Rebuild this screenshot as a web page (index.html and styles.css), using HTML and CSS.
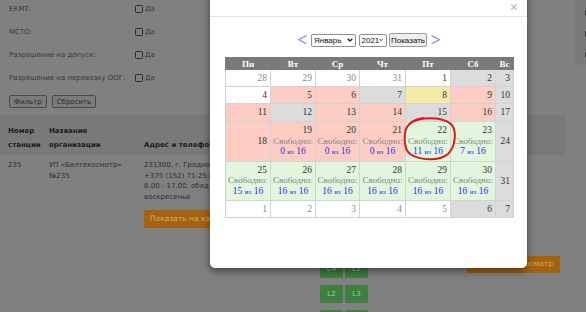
FILE: index.html
```html
<!DOCTYPE html>
<html lang="ru">
<head>
<meta charset="utf-8">
<title>Техосмотр</title>
<link rel="stylesheet" href="styles.css">
</head>
<body>
<div class="page">
  <div class="filters">
    <div class="filter-col">
      <div class="frow"><span class="flabel">ЕКМТ:</span><span class="chk"></span><span>Да</span></div>
      <div class="frow"><span class="flabel">МСТО:</span><span class="chk"></span><span>Да</span></div>
      <div class="frow"><span class="flabel">Разрешение на допуск:</span><span class="chk"></span><span>Да</span></div>
      <div class="frow"><span class="flabel">Разрешение на перевозку ООГ:</span><span class="chk"></span><span>Да</span></div>
      <div class="btns"><span class="btn">Фильтр</span><span class="btn">Сбросить</span></div>
    </div>
    <div class="filter-side">
      <span class="chk dark"></span><span class="chk dark"></span><span class="chk dark"></span>
    </div>
  </div>
  <div class="results-head">
    <div class="c-num">Номер<br>станции</div>
    <div class="c-name">Название<br>организации</div>
    <div class="c-addr">Адрес и телефон</div>
  </div>
  <div class="results-row">
    <div class="c-num">235</div>
    <div class="c-name">УП «Белтехосмотр»<br>№235</div>
    <div class="c-addr">
      <div class="addr">231300, г. Гродно, ул. Суворова, 135<br>+375 (152) 71-25-00<br>8.00 - 17.00, обед 13.00 - 14.00, выходной:<br>воскресенье</div>
      <span class="obtn">Показать на карте</span>
    </div>
    <div class="c-lines">
      <span class="gbtn">B1</span><span class="gbtn">B2</span>
      <span class="gbtn">C1</span><span class="gbtn">C2</span>
      <span class="gbtn">C3</span><span class="gbtn">M1</span>
      <span class="gbtn">M2</span><span class="gbtn">M3</span>
      <span class="gbtn">C4</span><span class="gbtn">L1</span>
      <span class="gbtn">L2</span><span class="gbtn">L3</span>
      <span class="gbtn"></span><span class="gbtn"></span>
    </div>
    <div class="c-act"><span class="obtn wide">Пройти техосмотр</span></div>
  </div>
</div>

<div class="modal">
  <div class="modal-head"><span class="close">×</span></div>
  <div class="modal-body">
    <div class="nav">
      <span class="arrow">&lt;</span>
      <span class="sel month"><span>Январь</span><svg width="6" height="4" viewBox="0 0 6 4"><path d="M0.7 0.7 L3 3 L5.3 0.7" fill="none" stroke="#222" stroke-width="1.3"/></svg></span>
      <span class="sel year"><span>2021</span><svg width="6" height="4" viewBox="0 0 6 4"><path d="M0.7 0.7 L3 3 L5.3 0.7" fill="none" stroke="#222" stroke-width="1.3"/></svg></span>
      <span class="show">Показать</span>
      <span class="arrow">&gt;</span>
    </div>
    <table class="cal">
      <colgroup><col class="w45"><col class="w45"><col class="w44"><col class="w46"><col class="w45"><col class="w45"><col class="w18"></colgroup>
      <thead><tr><th>Пн</th><th>Вт</th><th>Ср</th><th>Чт</th><th>Пт</th><th>Сб</th><th>Вс</th></tr></thead>
      <tbody>
        <tr class="r17">
          <td class="o">28</td><td class="o">29</td><td class="o">30</td><td class="o">31</td><td>1</td><td class="g">2</td><td class="g">3</td>
        </tr>
        <tr class="r17">
          <td>4</td><td class="p">5</td><td class="p">6</td><td class="g">7</td><td class="y">8</td><td class="p">9</td><td class="g">10</td>
        </tr>
        <tr class="r18">
          <td class="p">11</td><td class="g">12</td><td class="p">13</td><td class="p">14</td><td class="g">15</td><td class="p">16</td><td class="g">17</td>
        </tr>
        <tr class="r40">
          <td class="p">18</td>
          <td class="p"><div>19</div><div class="free">Свободно:</div><div class="cnt">0 <small>из</small> 16</div></td>
          <td class="p"><div>20</div><div class="free">Свободно:</div><div class="cnt">0 <small>из</small> 16</div></td>
          <td class="p"><div>21</div><div class="free">Свободно:</div><div class="cnt">0 <small>из</small> 16</div></td>
          <td class="gr"><div>22</div><div class="free">Свободно:</div><div class="cnt">11 <small>из</small> 16</div></td>
          <td class="gr"><div>23</div><div class="free">Свободно:</div><div class="cnt">7 <small>из</small> 16</div></td>
          <td class="g">24</td>
        </tr>
        <tr class="r39">
          <td class="gr"><div>25</div><div class="free">Свободно:</div><div class="cnt">15 <small>из</small> 16</div></td>
          <td class="gr"><div>26</div><div class="free">Свободно:</div><div class="cnt">16 <small>из</small> 16</div></td>
          <td class="gr"><div>27</div><div class="free">Свободно:</div><div class="cnt">16 <small>из</small> 16</div></td>
          <td class="gr"><div>28</div><div class="free">Свободно:</div><div class="cnt">16 <small>из</small> 16</div></td>
          <td class="gr"><div>29</div><div class="free">Свободно:</div><div class="cnt">16 <small>из</small> 16</div></td>
          <td class="gr"><div>30</div><div class="free">Свободно:</div><div class="cnt">16 <small>из</small> 16</div></td>
          <td class="g">31</td>
        </tr>
        <tr class="r17">
          <td class="o">1</td><td class="o">2</td><td class="o">3</td><td class="o">4</td><td class="o">5</td><td class="g">6</td><td class="g">7</td>
        </tr>
      </tbody>
    </table>
  </div>
  <svg class="mark" width="58" height="46" viewBox="0 0 58 46" aria-hidden="true">
    <path d="M10 7 C18 1, 40 0, 50 8 C56 14, 55 30, 47 38 C39 45, 19 45, 9 38 C3 33, 2 19, 6 11 C9 6, 15 3, 22 2" fill="none" stroke="#e01818" stroke-width="2" stroke-linecap="round"/>
  </svg>
</div>
</body>
</html>
```

FILE: styles.css
```css
html, body {
  margin: 0;
  padding: 0;
  overflow: hidden;
}
body {
  width: 586px;
  height: 312px;
  position: relative;
  background: #808080;
  font-family: "DejaVu Sans", sans-serif;
  font-size: 7px;
  color: #333;
}
.page {
  width: 586px;
  height: 312px;
  overflow: hidden;
}

/* filters */
.filters {
  display: flex;
  height: 115px;
}
.filter-col {
  display: flex;
  flex-direction: column;
  gap: 9px;
  padding: 2px 0 0 9px;
}
.frow {
  display: flex;
  align-items: center;
  height: 14px;
  color: #383838;
}
.flabel {
  width: 126px;
}
.chk {
  width: 8px;
  height: 8px;
  box-sizing: border-box;
  border: 1px solid #2c2c2c;
  border-radius: 1.5px;
  margin-right: 2px;
}
.btns {
  display: flex;
  gap: 5px;
  margin-top: 1px;
}
.btn {
  height: 13px;
  box-sizing: border-box;
  display: flex;
  align-items: center;
  padding: 0 4px;
  border: 1px solid #4a4a4a;
  border-radius: 2px;
  background: #7b7b7b;
  color: #2a2a2a;
}
.filter-side {
  margin-left: auto;
  width: 11px;
  height: 65px;
  background: #7a7a7a;
  display: flex;
  flex-direction: column;
  gap: 15px;
  padding-top: 10px;
  box-sizing: border-box;
  padding-left: 10px;
}
.chk.dark {
  flex: none;
  width: 6px;
  height: 6px;
  background: #333;
  border: none;
}

/* results */
.results-head {
  width: 566px;
  height: 40px;
  box-sizing: border-box;
  background: #797979;
  display: flex;
  align-items: flex-end;
  padding: 0 0 3px 8px;
  font-weight: bold;
  line-height: 13.5px;
  color: #1c1c1c;
}
.results-row {
  display: flex;
  padding: 5px 0 0 8px;
  line-height: 10.5px;
  color: #2e2e2e;
}
.c-num { width: 41px; flex: none; }
.c-name { width: 95px; flex: none; }
.c-addr { width: 176px; flex: none; white-space: nowrap; overflow: hidden; }
.c-lines {
  width: 48px;
  flex: none;
  display: flex;
  flex-wrap: wrap;
  align-content: flex-start;
  gap: 7px 2px;
  margin-right: 100px;
}
.addr { margin-bottom: 8px; }
.obtn {
  display: inline-flex;
  align-items: center;
  height: 18px;
  padding: 0 7px;
  margin-left: -1px;
  background: #a4640f;
  color: #d9a763;
  font-size: 7.5px;
}
.gbtn {
  width: 23px;
  height: 18px;
  border-radius: 2px;
  background: #3e7e3e;
  color: #a9cba9;
  font-size: 7px;
  display: flex;
  align-items: center;
  justify-content: center;
}
.c-act { padding-top: 96px; }
.obtn.wide {
  width: 93px;
  height: 17px;
  box-sizing: border-box;
  justify-content: flex-end;
}

/* modal */
.modal {
  position: absolute;
  left: 210px;
  top: -22px;
  width: 317px;
  height: 290px;
  background: #fff;
  border-radius: 5px;
  box-shadow: 0 3px 9px rgba(0, 0, 0, 0.5);
  font-family: "Liberation Sans", sans-serif;
}
.modal-head {
  height: 39px;
  box-sizing: border-box;
  border-bottom: 1px solid #e5e5e5;
  display: flex;
  justify-content: flex-end;
  align-items: flex-end;
  padding: 0 9px 2px 0;
}
.close {
  font-size: 14px;
  line-height: 14px;
  color: #b5b5b5;
}
.modal-body {
  padding: 16px 14px 0 15px;
}
.nav {
  display: flex;
  justify-content: center;
  align-items: center;
  gap: 2.5px;
  height: 14px;
  margin-bottom: 10px;
}
.arrow {
  font-family: "Liberation Serif", serif;
  font-size: 18px;
  line-height: 14px;
  color: #6464f0;
  margin: 0 1px;
}
.sel {
  height: 13px;
  box-sizing: border-box;
  display: flex;
  align-items: center;
  justify-content: space-between;
  padding: 0 2px 0 2px;
  font-size: 8px;
  border: 1px solid #8f8f8f;
  border-radius: 2px;
  background: #fff;
  color: #111;
}
.month { width: 45px; }
.year { width: 28px; }
.show {
  height: 14px;
  box-sizing: border-box;
  width: 38px;
  display: flex;
  align-items: center;
  justify-content: center;
  font-size: 8px;
  color: #111;
  background: #efefef;
  border: 1px solid #9a9a9a;
  border-radius: 2px;
}

.cal {
  width: 288px;
  table-layout: fixed;
  border-collapse: collapse;
  font-family: "Liberation Serif", serif;
  font-size: 9.5px;
  color: #333;
}
.w45 { width: 45px; }
.w44 { width: 44px; }
.w46 { width: 46px; }
.w18 { width: 18px; }
.cal th {
  height: 11px;
  padding: 0;
  background: #7a7a7a;
  border: 1px solid #7a7a7a;
  color: #fff;
  font-weight: bold;
  font-size: 9px;
  line-height: 10px;
}
.cal td {
  padding: 0 3px 0 0;
  border: 1px solid #d2d2d2;
  text-align: right;
  vertical-align: middle;
  line-height: 10.5px;
  background: #fff;
}
.r17 td { height: 16px; }
.r18 td { height: 17px; }
.r40 td { height: 39px; }
.r39 td { height: 38px; }
.cal td.o { color: #8a8a8a; }
.cal td.g { background: #dcdcdc; }
.cal td.p { background: #fdcdc4; }
.cal td.gr { background: #e1f6dd; }
.cal td.y { background: #f4eba6; }
.free {
  text-align: center;
  color: #858585;
  font-size: 9px;
  margin-right: -3px;
}
.cnt {
  text-align: center;
  color: #2f2fe6;
  font-size: 9.5px;
  margin-right: -3px;
}
.cnt small {
  font-size: 7px;
}
.mark {
  position: absolute;
  left: 191px;
  top: 138px;
}
```
